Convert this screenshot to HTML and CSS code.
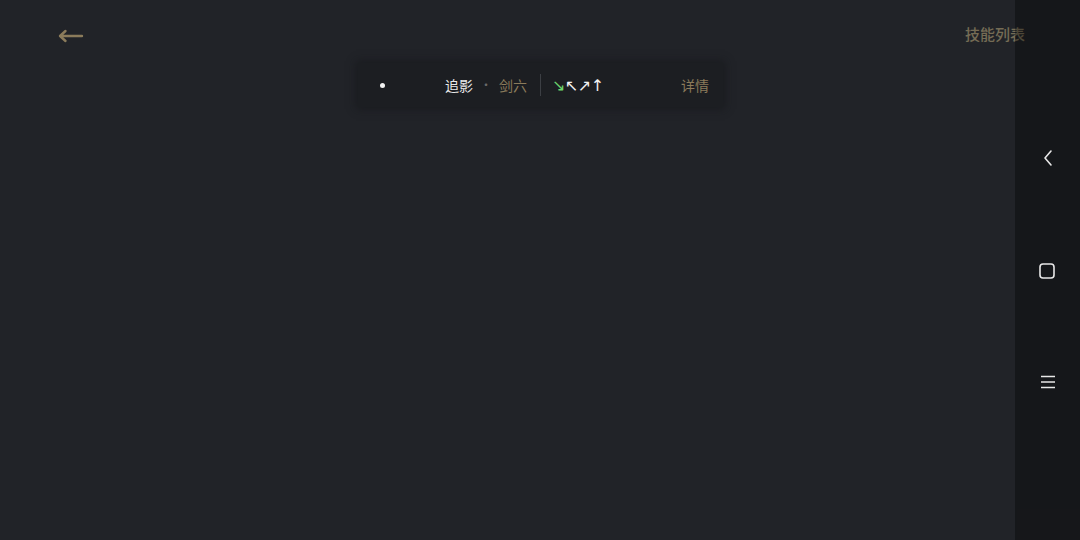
FILE: index.html
```html
<!DOCTYPE html>
<html lang="zh">
<head>
<meta charset="utf-8">
<link rel="stylesheet" href="styles.css">
</head>
<body>
<div class="app">
  <header class="topbar">
    <svg class="back" width="26" height="14" viewBox="0 0 26 14">
      <path d="M2 7 H24 M7.5 2 L2 7 L7.5 12" fill="none" stroke="#8b7b5b" stroke-width="2.4" stroke-linecap="round" stroke-linejoin="round"/>
    </svg>
    <div class="title">技能列表</div>
  </header>
  <div class="banner-row">
    <div class="banner">
      <span class="dot"></span>
      <span class="name">追影</span>
      <span class="sep">·</span>
      <span class="sub">剑六</span>
      <span class="divider"></span>
      <span class="arrows"><span class="green">↘</span>↖↗↑</span>
      <span class="detail">详情</span>
    </div>
  </div>
</div>
<nav class="sysnav">
  <svg class="ic-back" width="14" height="20" viewBox="0 0 14 20"><path d="M10 3 L4 10 L10 17" fill="none" stroke="#e8e8e8" stroke-width="1.6" stroke-linecap="round" stroke-linejoin="round"/></svg>
  <svg class="ic-home" width="18" height="18" viewBox="0 0 18 18"><rect x="2" y="2" width="14" height="14" rx="3" fill="none" stroke="#e8e8e8" stroke-width="1.6"/></svg>
  <svg class="ic-menu" width="18" height="16" viewBox="0 0 18 16"><path d="M2 2.5 H16 M2 8 H16 M2 13.5 H16" fill="none" stroke="#e8e8e8" stroke-width="1.5"/></svg>
</nav>
</body>
</html>
```

FILE: styles.css
```css
* { box-sizing: border-box; }
html, body {
  margin: 0;
  padding: 0;
  width: 1080px;
  height: 540px;
  overflow: hidden;
  background: #212328;
  font-family: "Noto Sans CJK SC", "Noto Sans", sans-serif;
}
.app {
  width: 1080px;
  height: 540px;
  display: flex;
  flex-direction: column;
}
.topbar {
  height: 63px;
  display: flex;
  align-items: flex-start;
  justify-content: space-between;
  padding: 24px 55px 0 58px;
}
.back {
  display: block;
  margin-top: 5px;
}
.title {
  font-size: 15px;
  line-height: 20px;
  font-weight: 500;
  color: #756c55;
}
.banner-row {
  display: flex;
  justify-content: center;
}
.banner {
  width: 365px;
  height: 44px;
  margin-left: 1px;
  background: #1c1e22;
  box-shadow: 0 0 8px 2px rgba(20, 22, 25, 0.6);
  display: flex;
  align-items: center;
  padding: 0 14px 0 22px;
  font-size: 14px;
  line-height: 20px;
}
.dot {
  width: 5px;
  height: 5px;
  border-radius: 50%;
  background: #f2f2f2;
}
.name {
  margin-left: 60px;
  color: #e8e8e8;
}
.sep {
  width: 26px;
  text-align: center;
  color: #6a6a6a;
  font-size: 12px;
}
.sub {
  color: #8b7b5b;
}
.divider {
  width: 1px;
  height: 22px;
  background: #3c3f44;
  margin-left: 13px;
}
.arrows {
  margin-left: 11px;
  margin-top: 1px;
  color: #f2f2f2;
  font-family: "DejaVu Sans", sans-serif;
  font-size: 16px;
  letter-spacing: -0.5px;
}
.green {
  color: #6cd46c;
}
.detail {
  margin-left: auto;
  color: #8b7b5b;
}
.sysnav {
  position: absolute;
  top: 0;
  right: 0;
  width: 65px;
  height: 540px;
  background: rgba(0, 0, 0, 0.34);
  display: flex;
  flex-direction: column;
  align-items: center;
  justify-content: center;
  gap: 94px;
  padding-bottom: 2px;
}
.sysnav svg { display: block; }
.ic-home { margin-right: 2px; }
```
